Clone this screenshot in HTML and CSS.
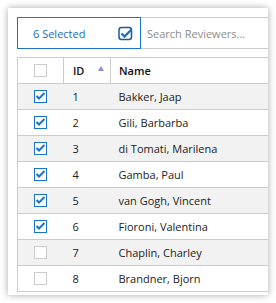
FILE: index.html
```html
<!DOCTYPE html>
<html lang="en">
<head>
	<meta charset="UTF-8">
	<title>Reviewers</title>
	<link rel="stylesheet" href="styles.css">
</head>
<body>
	<div class="panel">
		<div class="toolbar">
			<div class="picked">
				<span>6 Selected</span>
				<svg class="picked-icon" width="15" height="15" viewBox="0 0 15 15">
					<rect x="1" y="1.5" width="12.5" height="12" rx="2.5" fill="none" stroke="#1d5a96" stroke-width="1.5"/>
					<polyline points="3.5,7.5 6.5,10.5 13.5,3.5" fill="none" stroke="#1a73c8" stroke-width="2.4"/>
				</svg>
			</div>
			<div class="search">Search Reviewers...</div>
		</div>
		<table class="grid">
			<thead>
				<tr>
					<th class="col-check"><span class="box"></span></th>
					<th class="col-id">ID<span class="sort"></span></th>
					<th class="col-name">Name</th>
				</tr>
			</thead>
			<tbody>
				<tr class="odd"><td class="col-check"><span class="box on"></span></td><td class="col-id">1</td><td>Bakker, Jaap</td></tr>
				<tr><td class="col-check"><span class="box on"></span></td><td class="col-id">2</td><td>Gili, Barbarba</td></tr>
				<tr class="odd"><td class="col-check"><span class="box on"></span></td><td class="col-id">3</td><td>di Tomati, Marilena</td></tr>
				<tr><td class="col-check"><span class="box on"></span></td><td class="col-id">4</td><td>Gamba, Paul</td></tr>
				<tr class="odd"><td class="col-check"><span class="box on"></span></td><td class="col-id">5</td><td>van Gogh, Vincent</td></tr>
				<tr><td class="col-check"><span class="box on"></span></td><td class="col-id">6</td><td>Fioroni, Valentina</td></tr>
				<tr class="odd"><td class="col-check"><span class="box"></span></td><td class="col-id">7</td><td>Chaplin, Charley</td></tr>
				<tr><td class="col-check"><span class="box"></span></td><td class="col-id">8</td><td>Brandner, Bjorn</td></tr>
			</tbody>
		</table>
	</div>
</body>
</html>
```

FILE: styles.css
```css
*{
	margin: 0;
	padding: 0;
	box-sizing: border-box;
}
body{
	background: #fff;
	font-family: "Open Sans", "Noto Sans", sans-serif;
	font-size: 11px;
	color: #222;
	padding: 8px;
}
.panel{
	width: 260px;
	height: 287px;
	padding: 9px 0 0 9px;
	background: #fff;
	box-shadow: 0 0 7px rgba(0, 0, 0, 0.35);
	overflow: hidden;
}
.toolbar{
	display: flex;
	height: 32px;
}
.picked{
	width: 124px;
	display: flex;
	align-items: center;
	justify-content: space-between;
	padding: 0 7px 0 15px;
	border: 1px solid #1a73c8;
	color: #1a6cbc;
}
.picked-icon{
	display: block;
}
.search{
	flex: 1;
	display: flex;
	align-items: center;
	padding-left: 6px;
	border-top: 1px solid #ccc;
	border-bottom: 1px solid #ccc;
	color: #8c8c8c;
}
.grid{
	width: 251px;
	margin-top: 8px;
	border-collapse: collapse;
	border-left: 1px solid #ccc;
}
.grid th,
.grid td{
	height: 26px;
	text-align: left;
	padding: 0 0 0 8px;
	border-bottom: 1px solid #ccc;
	white-space: nowrap;
}
.grid th{
	border-top: 1px solid #ccc;
	border-right: 1px solid #ccc;
	font-weight: 600;
	color: #111;
	position: relative;
}
.grid th:last-child{
	border-right: none;
}
.grid .odd td{
	background: #f2f2f2;
}
.grid .col-check{
	width: 46px;
	padding-left: 16px;
}
.grid .col-id{
	width: 47px;
	padding-left: 9px;
}
.box{
	display: block;
	width: 13px;
	height: 13px;
	border: 1px solid #ccc;
	background: #fff;
}
.box.on{
	border-color: #1a73c8;
	background: #fff url("data:image/svg+xml,%3Csvg xmlns='http://www.w3.org/2000/svg' width='11' height='11' viewBox='0 0 11 11'%3E%3Cpolyline points='1.5,5 4,7.5 9.5,2' fill='none' stroke='%231a73c8' stroke-width='2'/%3E%3C/svg%3E") no-repeat center;
}
.sort{
	position: absolute;
	right: 6px;
	top: 8px;
	width: 0;
	height: 0;
	border-left: 3.5px solid transparent;
	border-right: 3.5px solid transparent;
	border-bottom: 5px solid #8e8ed8;
}
```
